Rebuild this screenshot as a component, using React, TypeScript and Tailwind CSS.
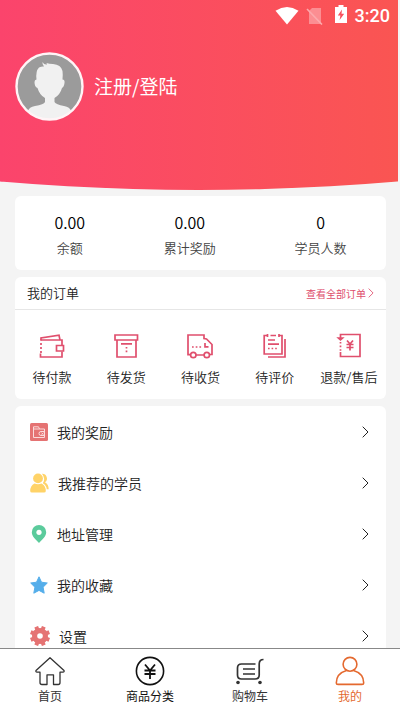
import type { ReactNode } from "react";

const stats = [
  { value: "0.00", label: "余额" },
  { value: "0.00", label: "累计奖励" },
  { value: "0", label: "学员人数" },
];

function OrderIcon({ children }: { children: ReactNode }) {
  return (
    <svg
      viewBox="0 0 26 26"
      className="h-[26px] w-[26px] text-[#e04f6d]"
      fill="none"
      stroke="currentColor"
      strokeWidth="1.7"
      aria-hidden
    >
      {children}
    </svg>
  );
}

const orders = [
  {
    label: "待付款",
    icon: (
      <OrderIcon>
        <path d="M2 7.5V5L20 2.2L21 7" />
        <path d="M1.5 7H23V12M23 18.5V24H1.5V20.5" />
        <path d="M2 10V20" strokeDasharray="2 2" />
        <path d="M17.5 12.5H24.5V18H17.5Z" />
      </OrderIcon>
    ),
  },
  {
    label: "待发货",
    icon: (
      <OrderIcon>
        <path d="M2 2H24.5V7H2ZM4 7V24H23V7M8 10.8H19" />
        <path d="M13.5 14V20" strokeDasharray="1.6 2" />
      </OrderIcon>
    ),
  },
  {
    label: "待收货",
    icon: (
      <OrderIcon>
        <path d="M3.5 21.7H1V2H17V5.5L19.5 6L25 11.5V21.5H23M9 22H17" />
        <circle cx="6.3" cy="22" r="2.7" />
        <circle cx="19.8" cy="22" r="2.7" />
        <path d="M5 14H14.5" strokeDasharray="1.7 2" />
        <path d="M18 10V13.8H21.5" />
      </OrderIcon>
    ),
  },
  {
    label: "待评价",
    icon: (
      <OrderIcon>
        <path d="M5 2.5H2.2V21H20V2.5H17.5M8.5 2.5H14M5.5 1V4M17 1V4" />
        <path d="M23 6V24H6M6 7H13M6 11.2H17" />
        <path d="M6 15.5H15.5" strokeDasharray="1.6 2" />
      </OrderIcon>
    ),
  },
  {
    label: "退款/售后",
    icon: (
      <OrderIcon>
        <path d="M4.5 5V1.5H24V23.5H4.5V19" />
        <path d="M4.5 9V18" strokeDasharray="1.6 2" />
        <path d="M2.5 5H6.5L4.5 6.8Z" fill="currentColor" />
        <path d="M11 7.5L14 11L17 7.5M14 11V17.5M10.5 11.5H17.5M10.5 14.5H17.5" />
      </OrderIcon>
    ),
  },
];

const menu = [
  {
    label: "我的奖励",
    icon: (
      <svg viewBox="0 0 18 18" className="h-[18px] w-[18px]" fill="none" aria-hidden>
        <rect width="18" height="18" rx="1.5" fill="#e57373" />
        <path
          d="M3.5 6V14.5H14.5V6H3.5V3.8H8.5L9.5 6M14.5 8.5H11A2 2 0 0 0 11 12.5H14.5M11.5 9.8L13.5 11.5M13.5 9.8L11.5 11.5"
          stroke="#fbdcdc"
        />
      </svg>
    ),
  },
  {
    label: "我推荐的学员",
    icon: (
      <svg viewBox="0 0 19 20" className="h-5 w-[19px]" fill="#ffd368" aria-hidden>
        <path d="M12 .8A4.7 4.7 0 0 1 15 9.3Q18.7 11.5 18.7 16.3H16.8Q16.2 12 12.8 10.2Q15.8 6 12 .8Z" />
        <circle cx="8" cy="5.4" r="4.9" />
        <path d="M4.5 10.5Q8 12 11.5 10.5Q15.8 12.8 15.8 18Q15.8 19.5 14 19.5H2Q.2 19.5 .2 18Q.2 12.8 4.5 10.5Z" />
      </svg>
    ),
  },
  {
    label: "地址管理",
    icon: (
      <svg viewBox="0 0 18 18" className="h-[18px] w-[18px]" aria-hidden>
        <path
          d="M9 0A7.2 7.2 0 0 0 1.8 7.2C1.8 11.5 6 14.8 9 18C12 14.8 16.2 11.5 16.2 7.2A7.2 7.2 0 0 0 9 0Z"
          fill="#5bcb9c"
        />
        <circle cx="9" cy="7.3" r="2.6" fill="#fff" />
      </svg>
    ),
  },
  {
    label: "我的收藏",
    icon: (
      <svg viewBox="0 0 18 18" className="h-[18px] w-[18px]" aria-hidden>
        <path
          d="M9 .8L11.5 6.2L17.3 7L13.1 11.2L14.2 17.2L9 14.4L3.8 17.2L4.9 11.2L.7 7L6.5 6.2Z"
          fill="#55aeea"
          stroke="#55aeea"
          strokeLinejoin="round"
        />
      </svg>
    ),
  },
  {
    label: "设置",
    icon: (
      <svg viewBox="0 0 20 20" className="h-5 w-5" aria-hidden>
        <circle cx="10" cy="10" r="8" fill="#e57373" />
        <path
          d="M10 10L6.2 .7M10 10L13.8 .7M10 10L19.3 6.2M10 10L19.3 13.8M10 10L13.8 19.3M10 10L6.2 19.3M10 10L.7 13.8M10 10L.7 6.2"
          stroke="#e57373"
          strokeWidth="4"
        />
        <circle cx="10" cy="10" r="2.8" fill="#fff" />
      </svg>
    ),
  },
];

const tabs = [
  {
    label: "首页",
    color: "text-[#333333]",
    icon: (
      <path
        d="M15 1.8L29 14.5Q29.5 16.2 28 16.2H25V26.5Q25 28.5 23.2 28.5H18.5V18.8H12V28.5H7Q5 28.5 5 26.5V16.2H2Q.5 16.2 1 14.5Z"
        strokeWidth="1.3"
      />
    ),
  },
  {
    label: "商品分类",
    color: "text-[#111111]",
    icon: (
      <>
        <circle cx="15" cy="15" r="13.6" />
        <path d="M10 8.5L15 14.5L20 8.5M15 14.5V23M9.5 14.5H20.5M9.5 18H20.5" strokeWidth="1.8" />
      </>
    ),
  },
  {
    label: "购物车",
    color: "text-[#333333]",
    icon: (
      <>
        <path
          d="M20.5 8H6.5Q2.5 8 2.5 12V19Q2.5 23 6.5 23H20Q24.2 23 24.2 19V8Q24.2 3.5 28.5 3.5M8 13H20M8 18H20"
          strokeWidth="1.7"
        />
        <circle cx="3" cy="26.5" r="1.8" fill="currentColor" stroke="none" />
        <circle cx="25" cy="26.5" r="1.8" fill="currentColor" stroke="none" />
      </>
    ),
  },
  {
    label: "我的",
    color: "text-[#e4692f]",
    icon: (
      <>
        <circle cx="15" cy="8.3" r="6.9" />
        <path d="M11.5 14.5Q1.3 17.5 1.3 27Q1.3 28.4 3 28.4H27Q28.7 28.4 28.7 27Q28.7 17.5 18.5 14.5" />
      </>
    ),
  },
];

function Chevron({ className }: { className: string }) {
  return (
    <svg viewBox="0 0 7 12" className={className} fill="none" stroke="currentColor" aria-hidden>
      <path d="M.7 .7L6 6L.7 11.3" />
    </svg>
  );
}

function StatusBar() {
  return (
    <div className="flex h-8 items-center justify-end pr-2 text-white">
      <svg viewBox="0 0 24 18" className="mr-[7px] h-[18px] w-6" fill="currentColor" aria-hidden>
        <path d="M12 17.5L.5 3.7Q12-3.5 23.5 3.7Z" />
      </svg>
      <svg viewBox="0 0 17 18" className="mr-3 h-[18px] w-[17px] opacity-50" aria-hidden>
        <path d="M6 1H15V17H3V4Z" fill="currentColor" opacity=".7" />
        <path d="M1 2L16 17.5" stroke="currentColor" strokeWidth="1.6" />
      </svg>
      <svg viewBox="0 0 12 22" className="mr-2 h-[22px] w-3" aria-hidden>
        <path d="M3.5 0H8.5V2H12V18H0V2H3.5Z" fill="currentColor" />
        <path d="M7 4.5L2.8 10.5H5.4L4.6 15L9.2 8.8H6.5Z" fill="#f94f5c" />
      </svg>
      <span className="font-['Roboto',sans-serif] text-lg font-medium">3:20</span>
    </div>
  );
}

export default function App() {
  return (
    <div className="flex h-screen flex-col bg-[#f4f4f4] font-['Noto_Sans_CJK_SC',sans-serif] text-[#222222]">
      <main className="min-h-0 flex-1 overflow-hidden font-[350]">
        <header className="mr-[2px] h-[190px] bg-linear-to-r from-[#fb446c] to-[#fa5552] [clip-path:ellipse(169%_190px_at_50%_0)]">
          <StatusBar />
          <div className="mt-5 flex items-center gap-[10px] pl-[15px]">
            <svg viewBox="0 0 69 69" className="h-[69px] w-[69px]" aria-hidden>
              <circle cx="34.5" cy="34.5" r="33" fill="#9b9b9b" />
              <path
                d="M13 59Q14 55 20 54Q29 52.5 30 50V46Q24.5 43 22.5 36Q19.5 35 19.5 30Q19.5 27.5 21.5 27.5Q20.5 19 24 15.5Q27 14 29 14.5Q27 12.5 27.5 10Q29 13 32 12.5L31.5 11Q34 12 38 12Q46 12.5 47.5 19Q48 23 47.5 27.5Q50 27.5 49.5 31Q49 35 47 36Q45 43 39.5 46V50Q41 52.5 49 54Q55 55 56 59Q46 67.5 34.5 67.5Q22 67 13 59Z"
                fill="#f1f1f1"
              />
              <circle cx="34.5" cy="34.5" r="33" fill="none" stroke="#fff4f6" strokeWidth="2.4" />
            </svg>
            <a href="#login" className="text-[19px] font-normal text-white">
              注册/登陆
            </a>
          </div>
        </header>

        <div className="mt-[6px] flex flex-col gap-[7px] pr-[14px] pl-[15px]">
          <section className="flex h-[74px] justify-around rounded-md bg-white pt-3">
            {stats.map(({ value, label }) => (
              <div key={label} className="flex flex-col items-center">
                <span className="text-base leading-7 text-black">{value}</span>
                <span className="text-[13px] leading-6 text-[#444444]">{label}</span>
              </div>
            ))}
          </section>

          <section className="rounded-md bg-white">
            <div className="flex h-[33px] items-center justify-between border-b border-[#e6e6e6] px-3">
              <h2 className="text-[13px]">我的订单</h2>
              <a
                href="#orders"
                className="flex items-center gap-[2px] text-[10px] font-normal text-[#de4d6c]"
              >
                查看全部订单
                <Chevron className="h-[10px] w-[6px]" />
              </a>
            </div>
            <div className="grid grid-cols-5 pt-[23px] pb-3">
              {orders.map(({ label, icon }) => (
                <button key={label} type="button" className="flex flex-col items-center gap-2">
                  {icon}
                  <span className="text-[13px] leading-5">{label}</span>
                </button>
              ))}
            </div>
          </section>

          <section className="rounded-md bg-white">
            {menu.map(({ label, icon }) => (
              <a
                key={label}
                href="#menu"
                className="flex h-[51px] items-center gap-[9px] pr-[17px] pl-[15px]"
              >
                {icon}
                <span className="flex-1 text-sm">{label}</span>
                <Chevron className="h-3 w-[7px]" />
              </a>
            ))}
          </section>
        </div>
      </main>

      <nav className="grid h-[63px] shrink-0 grid-cols-4 border-t border-[#888888] bg-white pt-[7px]">
        {tabs.map(({ label, icon, color }) => (
          <a key={label} href="#tab" className={`flex flex-col items-center ${color}`}>
            <svg
              viewBox="0 0 30 30"
              className="h-[30px] w-[30px]"
              fill="none"
              stroke="currentColor"
              strokeWidth="1.6"
              strokeLinejoin="round"
              aria-hidden
            >
              {icon}
            </svg>
            <span className="text-xs leading-5">{label}</span>
          </a>
        ))}
      </nav>
    </div>
  );
}
